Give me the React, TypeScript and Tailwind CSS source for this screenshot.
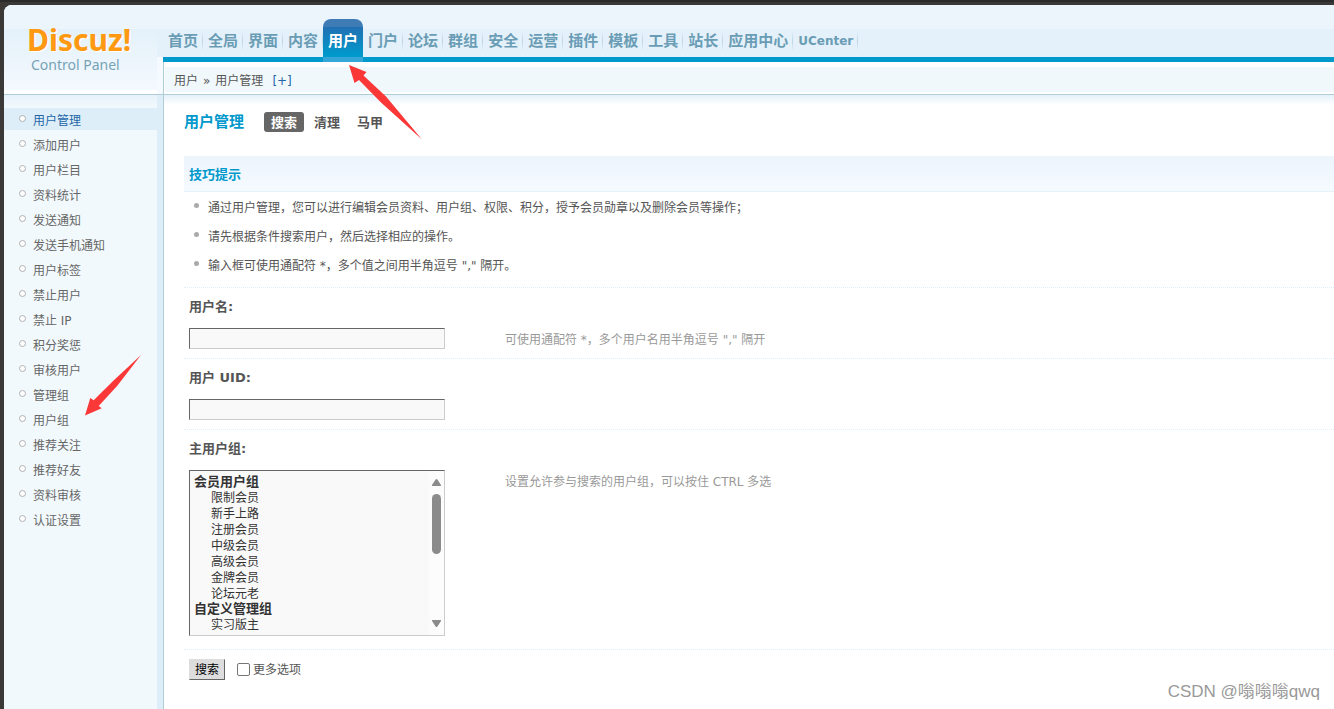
import React from "react";
import clsx from "clsx";

const topNav = [
  "首页",
  "全局",
  "界面",
  "内容",
  "用户",
  "门户",
  "论坛",
  "群组",
  "安全",
  "运营",
  "插件",
  "模板",
  "工具",
  "站长",
  "应用中心",
  "UCenter",
];

const sideMenu = [
  "用户管理",
  "添加用户",
  "用户栏目",
  "资料统计",
  "发送通知",
  "发送手机通知",
  "用户标签",
  "禁止用户",
  "禁止 IP",
  "积分奖惩",
  "审核用户",
  "管理组",
  "用户组",
  "推荐关注",
  "推荐好友",
  "资料审核",
  "认证设置",
];

const tips = [
  "通过用户管理，您可以进行编辑会员资料、用户组、权限、积分，授予会员勋章以及删除会员等操作；",
  "请先根据条件搜索用户，然后选择相应的操作。",
  '输入框可使用通配符 *，多个值之间用半角逗号 "," 隔开。',
];

const userGroups = [
  {
    label: "会员用户组",
    options: [
      "限制会员",
      "新手上路",
      "注册会员",
      "中级会员",
      "高级会员",
      "金牌会员",
      "论坛元老",
    ],
  },
  {
    label: "自定义管理组",
    options: ["实习版主"],
  },
];

const inset =
  "block w-64 rounded-none border border-t-[#666] border-l-[#666] border-r-[#ccc] border-b-[#ccc] bg-[#f9f9f9] text-[#333] outline-none";

function Logo() {
  return (
    <a href="#" className="block pt-5 pl-[23px]">
      <span className="block h-8 font-['Noto_Sans',sans-serif] text-[30px] leading-[30px] font-bold text-[#ff9912] [text-shadow:1px_1px_0_#fff]">
        Discuz!
      </span>
      <span className="block pl-1 font-['Noto_Sans',sans-serif] text-sm leading-4 text-[#76a3b6]">
        Control Panel
      </span>
    </a>
  );
}

function TopNav() {
  return (
    <nav>
      <ul className="flex h-[57px] items-end bg-[linear-gradient(#ecf4fc_24px,#e4f1fa_24px,#e4f1fa_52px,#0099cc_52px)] whitespace-nowrap">
        {topNav.map((item) => (
          <li key={item}>
            <a
              href="#"
              className={clsx(
                "block h-[43px] px-[5px] leading-[45px] font-bold",
                item === "UCenter" ? "text-xs" : "text-[15px]",
                item === "用户"
                  ? "rounded-t-lg bg-[linear-gradient(#3f7cb6_8px,#2170b2_8px,#0099cc_36px,#0099cc_38px,#35a6d8_38px)] text-white"
                  : "bg-[linear-gradient(#e4f1fa,#bcd6e3,#e4f1fa)] bg-[length:1px_20px] bg-[position:right_12px] bg-no-repeat text-[#6a9db5]"
              )}
            >
              {item}
            </a>
          </li>
        ))}
      </ul>
    </nav>
  );
}

type RowProps = {
  label: string;
  htmlFor: string;
  hint?: string;
  last?: boolean;
  children: React.ReactNode;
};

function Row({ label, htmlFor, hint, children, last = false }: RowProps) {
  return (
    <div
      className={clsx(
        "grid grid-cols-[316px_1fr] border-b border-dotted border-[#deeffb] pt-2",
        last ? "pb-[13px]" : "pb-[9px]"
      )}
    >
      <div className="pl-[5px]">
        <label
          htmlFor={htmlFor}
          className="mb-[10px] block text-[13px] leading-[22px] font-bold"
        >
          {label}
        </label>
        {children}
      </div>
      <p className="pt-[35px] pl-[5px] leading-[18px] text-[#999]">{hint}</p>
    </div>
  );
}

function GroupSelect() {
  return (
    <div className="relative w-64">
      <select
        id="groups"
        multiple
        size={10}
        className={clsx(
          inset,
          "h-[166px] overflow-y-auto px-[2px] py-0 text-xs [scrollbar-width:none]"
        )}
      >
        {userGroups.map((group) => (
          <optgroup
            key={group.label}
            label={group.label}
            className="-mb-[2px] p-0 text-[13px] leading-4 font-bold"
          >
            {group.options.map((o, i) => (
              <option
                key={o}
                className={clsx(
                  "h-4 min-h-0 py-0 pr-0 pl-[19px] text-xs leading-4 font-normal",
                  i === 0 && "-mt-[3px]"
                )}
              >
                {o}
              </option>
            ))}
          </optgroup>
        ))}
      </select>
      {/* scrollbar */}
      <div
        aria-hidden="true"
        className="pointer-events-none absolute inset-y-px right-px flex w-[15px] flex-col items-center justify-between bg-[#fcfcfc] py-[7px]"
      >
        <svg width="11" height="9" viewBox="0 0 11 9" fill="#8b8b8b">
          <path d="M5.5 1 Q6 1 6.4 1.6 L10 7 Q10.300 8 9.500 8 H1.500 Q0.700 8 1 7 L4.600 1.600 Q5 1 5.500 1Z" />
        </svg>
        <div className="mt-[7px] mb-auto h-[60px] w-[9px] rounded-full bg-[#8b8b8b]" />
        <svg width="11" height="9" viewBox="0 0 11 9" fill="#8b8b8b">
          <path d="M5.5 8 Q6 8 6.4 7.4 L10 2 Q10.300 1 9.500 1 H1.500 Q0.700 1 1 2 L4.600 7.400 Q5 8 5.500 8Z" />
        </svg>
      </div>
    </div>
  );
}

export default function App() {
  return (
    <div className="relative min-h-screen overflow-hidden border-t-2 border-[#2b2b2b] bg-[#3b3938] pt-[3px] pl-1 font-['DejaVu_Sans','Noto_Sans_CJK_SC',sans-serif] text-xs text-[#555]">
      <div className="flex min-h-[calc(100vh-5px)] flex-col overflow-hidden rounded-tl-lg bg-white">
        <header className="flex h-[90px] border-b border-[#b0cdd6] bg-[#ecf4fc]">
          <div className="w-[153px] shrink-0 border-b-4 border-white bg-[linear-gradient(#ecf4fc_24px,#e4f1fa_24px,#f4f9fe_85px)]">
            <Logo />
          </div>
          <div className="w-[6px] shrink-0 bg-[linear-gradient(#ecf4fc_24px,#e4f1fa_24px,#e4f1fa_52px,#f4faff_52px)]" />
          <div className="min-w-0 flex-1">
            <TopNav />
            <div className="border-l border-[#b0cdd6] bg-white pt-[5px] pb-[2px] pl-px">
              <div className="flex h-[25px] gap-[5px] bg-[#f1f8fc] pl-[9px] leading-[28px]">
                <span>用户</span>
                <span>»</span>
                <span>用户管理</span>
                <a href="#" className="pl-1 text-[#2366a8]">
                  [+]
                </a>
              </div>
            </div>
          </div>
        </header>

        <div className="flex flex-1">
          <aside className="w-[159px] shrink-0 border-r-[6px] border-[#ddeef8] bg-[linear-gradient(#e6f2fa,#f2f9fd_13px)] pt-[13px]">
            <ul className="flex flex-col gap-[3px]">
              {sideMenu.map((item, i) => (
                <li key={item}>
                  <a
                    href="#"
                    className={clsx(
                      "flex h-[22px] items-start pl-[15px] leading-[26px]",
                      i === 0 ? "bg-[#ddeef8] text-[#2366a8]" : "text-[#666]"
                    )}
                  >
                    <span className="mt-[7px] mr-[7px] size-[7px] rounded-full border border-[#b0b0b0] bg-white" />
                    {item}
                  </a>
                </li>
              ))}
            </ul>
          </aside>

          <main className="min-w-0 flex-1 border-l border-[#b0cdd6] bg-[linear-gradient(#e4f1fa,#ffffff_10px)] pt-4 pl-5">
            <div className="flex h-[22px] items-center">
              <h3 className="mr-5 text-[15px] leading-[24px] font-bold text-[#0099cc]">
                用户管理
              </h3>
              <ul className="flex gap-[3px] text-[13px] leading-[22px] font-bold">
                <li>
                  <a
                    href="#"
                    className="block h-5 rounded-[3px] bg-[#666] px-[7px] text-white"
                  >
                    搜索
                  </a>
                </li>
                <li>
                  <a href="#" className="block h-5 px-[7px]">
                    清理
                  </a>
                </li>
                <li>
                  <a href="#" className="block h-5 px-[7px]">
                    马甲
                  </a>
                </li>
              </ul>
            </div>

            <section className="mt-[23px]">
              <h4 className="h-9 border-b border-dotted border-[#deeffb] bg-linear-to-b from-[#ecf4fc] to-[#f5faff] pl-[5px] text-[13px] leading-[38px] font-bold text-[#0099cc]">
                技巧提示
              </h4>
              <ul className="border-b border-dotted border-[#deeffb] pt-[2px] pb-[6px]">
                {tips.map((tip) => (
                  <li
                    key={tip}
                    className="flex items-center pl-[10px] leading-[29px]"
                  >
                    <span className="mr-[9px] mb-[7px] size-[5px] shrink-0 rounded-full bg-[#aaa]" />
                    {tip}
                  </li>
                ))}
              </ul>
            </section>

            <form onSubmit={(e) => e.preventDefault()}>
              <Row
                label="用户名:"
                htmlFor="username"
                hint={'可使用通配符 *，多个用户名用半角逗号 "," 隔开'}
              >
                <input
                  id="username"
                  type="text"
                  className={clsx(inset, "h-[21px] px-1")}
                />
              </Row>
              <Row label="用户 UID:" htmlFor="uid">
                <input
                  id="uid"
                  type="text"
                  className={clsx(inset, "h-[21px] px-1")}
                />
              </Row>
              <Row
                label="主用户组:"
                htmlFor="groups"
                hint="设置允许参与搜索的用户组，可以按住 CTRL 多选"
                last
              >
                <GroupSelect />
              </Row>
              <div className="flex items-center pt-[9px] pl-[5px]">
                <button
                  type="submit"
                  className="h-[21px] border border-t-[#ddd] border-l-[#ddd] border-r-[#666] border-b-[#666] bg-[#ddd] px-[5px] leading-[21px] text-black"
                >
                  搜索
                </button>
                <label className="ml-3 flex items-center gap-[3px]">
                  <input
                    type="checkbox"
                    className="size-[13px] appearance-none rounded-[2px] border border-[#767676] bg-white"
                  />
                  更多选项
                </label>
              </div>
            </form>
          </main>
        </div>
      </div>

      {/* pointers over the nav tab and the menu entry */}
      <svg
        className="pointer-events-none absolute top-[61px] left-[348px]"
        width="75"
        height="78"
        viewBox="0 0 75 78"
        fill="#fb3838"
      >
        <path d="M1 2 L18.5 9 L15.5 12.5 L38 33.5 L74 76.500 L33 39.5 L11 17 L6.5 20 Z" />
      </svg>
      <svg
        className="pointer-events-none absolute top-[351px] left-[84px]"
        width="58"
        height="64"
        viewBox="0 0 58 64"
        fill="#fb3838"
      >
        <path d="M1 62.500 L6.3 45 L9.700 47.300 L29.300 27.700 L57 2 L33.300 32.700 L14.700 53 L17.700 55.300 Z" />
      </svg>

      <div className="absolute right-[14px] bottom-[5px] font-['Liberation_Sans','Noto_Sans_CJK_SC',sans-serif] text-[17px] leading-6 text-[#999] [text-shadow:-1px_-1px_0_#fff]">
        CSDN @嗡嗡嗡qwq
      </div>
    </div>
  );
}
